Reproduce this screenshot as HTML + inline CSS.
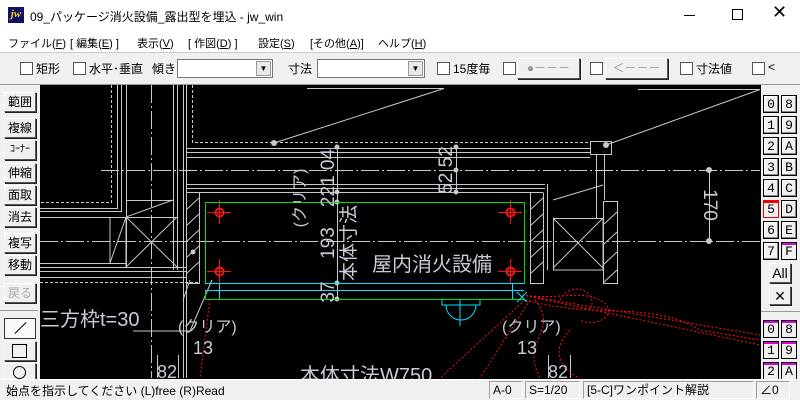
<!DOCTYPE html>
<html><head><meta charset="utf-8"><style>
*{margin:0;padding:0;box-sizing:border-box}
body{width:800px;height:400px;overflow:hidden;background:#f0f0f0;font-family:"Liberation Sans","Noto Sans CJK JP",sans-serif;font-size:12px;color:#000;position:relative}
.a{position:absolute;white-space:nowrap}
.m{font-size:11px;top:35px}
.cb{position:absolute;width:13px;height:13px;border:1px solid #555;background:#fff}
.btn{position:absolute;background:#f0f0f0;border:1px solid;border-color:#fff #555 #555 #fff;box-shadow:1px 1px 0 #222;text-align:center;font-size:12px;line-height:18px}
.lb{left:4px;width:32px;height:20px}
.rb{position:absolute;width:16px;height:18px;background:#f0f0f0;border:1px solid #000;box-shadow:inset -1px -1px 0 #888,inset 1px 1px 0 #fff;font-family:"Liberation Mono","Noto Sans CJK JP",monospace;font-size:13px;text-align:center;line-height:17px}
.sb{position:absolute;top:381px;height:18px;border:1px solid;border-color:#a0a0a0 #fff #fff #a0a0a0;line-height:16px;padding-left:3px;font-size:12px}
</style></head><body>
<div class="a" style="left:0;top:0;width:800px;height:30px;background:#fff"></div>
<div class="a" style="left:8px;top:7px;width:16px;height:16px;background:#10106a;color:#ffd000;font:bold italic 11px 'Liberation Serif',serif;line-height:15px;text-align:center">jw</div>
<div class="a" style="left:30px;top:8px;font-size:12px">09_パッケージ消火設備_露出型を埋込 - jw_win</div>
<div class="a" style="left:684px;top:15px;width:11px;height:1px;background:#000"></div>
<div class="a" style="left:732px;top:9px;width:11px;height:11px;border:1px solid #000"></div>
<div class="a" style="left:772px;top:2px;font-size:18px;font-weight:300">✕</div>
<div class="a" style="left:0;top:30px;width:800px;height:22px;background:#fff"></div>
<div class="a m" style="left:8px">ファイル(<u>F</u>)</div>
<div class="a m" style="left:70px">[ 編集(<u>E</u>) ]</div>
<div class="a m" style="left:137px">表示(<u>V</u>)</div>
<div class="a m" style="left:188px">[ 作図(<u>D</u>) ]</div>
<div class="a m" style="left:258px">設定(<u>S</u>)</div>
<div class="a m" style="left:310px">[その他(<u>A</u>)]</div>
<div class="a m" style="left:378px">ヘルプ(<u>H</u>)</div>
<div class="a" style="left:0;top:52px;width:800px;height:1px;background:#ccc"></div>
<div class="cb" style="left:20px;top:62px"></div><div class="a" style="left:36px;top:60px">矩形</div>
<div class="cb" style="left:73px;top:62px"></div><div class="a" style="left:89px;top:60px">水平･垂直</div>
<div class="a" style="left:152px;top:60px">傾き</div>
<div class="a" style="left:177px;top:59px;width:96px;height:19px;background:#fff;border:1px solid #777"></div>
<div class="a" style="left:256px;top:61px;width:15px;height:15px;background:#e8e8e8;border:1px solid #999;font-size:8px;text-align:center;line-height:14px">▼</div>
<div class="a" style="left:288px;top:60px">寸法</div>
<div class="a" style="left:317px;top:59px;width:108px;height:19px;background:#fff;border:1px solid #777"></div>
<div class="a" style="left:408px;top:61px;width:15px;height:15px;background:#e8e8e8;border:1px solid #999;font-size:8px;text-align:center;line-height:14px">▼</div>
<div class="cb" style="left:437px;top:62px"></div><div class="a" style="left:453px;top:60px">15度毎</div>
<div class="cb" style="left:503px;top:62px"></div>
<div class="btn" style="left:517px;top:58px;width:63px;height:21px;color:#999">●－－－</div>
<div class="cb" style="left:590px;top:62px"></div>
<div class="btn" style="left:605px;top:58px;width:63px;height:21px;color:#999">＜－－－</div>
<div class="cb" style="left:680px;top:62px"></div><div class="a" style="left:696px;top:60px">寸法値</div>
<div class="cb" style="left:752px;top:62px"></div><div class="a" style="left:768px;top:60px">&lt;</div>
<div class="a" style="left:0;top:84px;width:800px;height:1px;background:#999"></div>
<div class="btn lb" style="top:92px">範囲</div>
<div class="btn lb" style="top:118px">複線</div>
<div class="btn lb" style="top:140px;font-size:10px">ｺｰﾅｰ</div>
<div class="btn lb" style="top:163px">伸縮</div>
<div class="btn lb" style="top:185px">面取</div>
<div class="btn lb" style="top:207px">消去</div>
<div class="btn lb" style="top:233px">複写</div>
<div class="btn lb" style="top:255px">移動</div>
<div class="btn lb" style="top:283px;color:#aaa">戻る</div>
<div class="a" style="left:0;top:310px;width:38px;height:1px;background:#999"></div>
<div class="a" style="left:4px;top:318px;width:32px;height:21px;border:1px solid #333;background:#fafafa"></div>
<div class="a" style="top:320px;width:1px;height:16px;background:#000;transform:rotate(45deg);left:20px"></div>
<div class="btn lb" style="top:341px"></div><div class="a" style="left:12px;top:344px;width:15px;height:14px;border:1px solid #000"></div>
<div class="btn lb" style="top:363px"></div><div class="a" style="left:13px;top:366px;width:13px;height:13px;border:1px solid #000;border-radius:50%"></div>
<svg class="a" style="left:40px;top:85px" width="721" height="294" viewBox="40 85 721 294">
<rect x="40" y="85" width="721" height="294" fill="#000"/>
<g stroke="#c8c8c8" stroke-width="1" fill="none">
<path d="M111.5 85V202.5H40" stroke-dasharray="3 2"/>
<path d="M117.5 85V208.5H40M121.5 85V211.5H40"/>
<path d="M126.5 85V267M173.5 85V270M177.5 85V270M183.5 85V378M186.5 85V378"/>
<path d="M151.5 85V378M101 170.5H760M40 241.5H760" stroke-dasharray="18 3 2 3"/>
<path d="M186 148.5H590M186 152.5H590M186 157.5H590M186 184.5H545M186 188.5H545M186 192.5H543"/>
<path d="M192.5 85V142.5H590" stroke-dasharray="3 2"/>
<path d="M126 200.5H173M40 217.5H177M126 217.5V267.5H177M126 217L177 267M177 217L126 267M126 217L173 200M110 217V263L126 217"/>
<path d="M40 263.5H126M40 267.5H186M40 271.5H186M40 277.5H186"/>
<path d="M40 282.5H200" stroke-dasharray="3 2"/>
<rect x="186.5" y="192.5" width="13" height="91"/>
<path d="M186 210L199 198M186 226L199 214M186 242L199 230M186 258L199 246M186 274L199 262M183 300L190 280"/>
<path d="M530.5 192.5V283.5H543.5V192.5M530 210L543 198M530 226L543 214M530 242L543 230M530 258L543 246M530 274L543 262"/>
<path d="M547.5 192V270M553.5 218V270H603M547.5 184V192M553 218.5H603V270M553 218L603 268M603 218L553 268M553 200L603 185"/>
<path d="M590.5 141.5H611.5V154.5H590.5ZM596.5 154V218M604.5 154V200"/>
<path d="M603.5 201.5H617.5V283.5H603.5ZM603 225L617 212M603 245L617 232M603 265L617 252M603 283L617 270"/>
<path d="M337.5 147V299M456.5 147V192M709.5 170V241M307 88.5H444L274 143M638 89.5H760L606 145"/>
<path d="M133 331H190L212 280" />
<path d="M157.5 355V378M178.5 355V378M548.5 355V378M570.5 355V378"/>
</g>
<g fill="#c8c8c8"><circle cx="274" cy="143" r="3"/><circle cx="606" cy="145" r="3"/><circle cx="337" cy="147" r="2.5"/><circle cx="337" cy="192" r="2.5"/><circle cx="337" cy="202" r="2.5"/><circle cx="337" cy="283" r="2.5"/><circle cx="337" cy="299" r="2.5"/><circle cx="456" cy="147" r="2.5"/><circle cx="456" cy="170" r="2.5"/><circle cx="456" cy="192" r="2.5"/><circle cx="709" cy="170" r="3"/><circle cx="709" cy="241" r="3"/><circle cx="193" cy="252" r="2.5"/></g>
<g fill="none" stroke="#ff1010" stroke-dasharray="2 2">
<path d="M522 295L760 335M522 295L760 345M522 295C560 300 580 290 600 300C620 310 600 330 580 320M525 300L440 378M530 300L480 378M535 300C560 330 520 340 540 378M525 300C600 320 650 300 700 330L760 340M210 299L200 378"/>
<path d="M560 300C570 280 600 290 590 310M570 330C550 350 560 370 580 378"/>
</g>
<g stroke="#ff1010" fill="none"><path d="M207 212.5H231M219.5 200V224M207 271.5H231M219.5 259V283M498 212.5H522M510.5 200V224M498 271.5H522M510.5 259V283"/>
<circle cx="219.5" cy="212.5" r="4" stroke-width="2"/><circle cx="219.5" cy="271.5" r="4" stroke-width="2"/><circle cx="510.5" cy="212.5" r="4" stroke-width="2"/><circle cx="510.5" cy="271.5" r="4" stroke-width="2"/></g>
<g stroke="#00e000" fill="none"><rect x="205.5" y="202.5" width="319" height="81"/><path d="M205.5 290.5V299.5H524"/></g>
<g stroke="#00e0ff" fill="none"><path d="M205 283.5H524M205 290.5H524M219.5 283V299M512.5 283V299M442 300V305H480V300M446 305A15 15 0 0 0 476 305M460 300V326M517 292L527 302M527 292L517 302"/></g>
<g fill="#c8ccd8" font-family="'Liberation Sans','Noto Sans CJK JP',sans-serif">
<text x="372" y="271" font-size="20">屋内消火設備</text>
<text x="40" y="326" font-size="20">三方枠t=30</text>
<text x="178" y="332" font-size="16">(クリア)</text>
<text x="193" y="354" font-size="18">13</text>
<text x="502" y="332" font-size="16">(クリア)</text>
<text x="517" y="354" font-size="18">13</text>
<text x="157" y="378" font-size="18">82</text>
<text x="548" y="378" font-size="18">82</text>
<text x="300" y="382" font-size="20">本体寸法W750</text>
<text transform="translate(305,198) rotate(-90)" font-size="16" text-anchor="middle">(クリア)</text>
<text transform="translate(334,178) rotate(-90)" font-size="19" text-anchor="middle">221 04</text>
<text transform="translate(334,243) rotate(-90)" font-size="19" text-anchor="middle">193</text>
<text transform="translate(334,292) rotate(-90)" font-size="19" text-anchor="middle">37</text>
<text transform="translate(355,243) rotate(-90)" font-size="19" text-anchor="middle">本体寸法</text>
<text transform="translate(452,170) rotate(-90)" font-size="19" text-anchor="middle">52 52</text>
<text transform="translate(704,205) rotate(90)" font-size="19" text-anchor="middle">170</text>
</g>
</svg>
<div class="a" style="left:761px;top:85px;width:39px;height:295px;background:#f0f0f0"></div>
<div class="rb" style="left:763px;top:95px">0</div><div class="rb" style="left:781px;top:95px">8</div>
<div class="rb" style="left:763px;top:116px">1</div><div class="rb" style="left:781px;top:116px">9</div>
<div class="rb" style="left:763px;top:137px">2</div><div class="rb" style="left:781px;top:137px">A</div>
<div class="rb" style="left:763px;top:158px">3</div><div class="rb" style="left:781px;top:158px">B</div>
<div class="rb" style="left:763px;top:179px">4</div><div class="rb" style="left:781px;top:179px">C</div>
<div class="rb" style="left:763px;top:200px;border:1px solid #e00;box-shadow:inset 0 2px 0 #e00">5</div><div class="rb" style="left:781px;top:200px">D</div>
<div class="rb" style="left:763px;top:221px">6</div><div class="rb" style="left:781px;top:221px">E</div>
<div class="rb" style="left:763px;top:242px">7</div><div class="rb" style="left:781px;top:242px;box-shadow:inset 0 2px 0 #d0d">F</div>
<div class="btn" style="left:769px;top:263px;width:22px;height:20px;font-size:14px">All</div>
<div class="btn" style="left:769px;top:286px;width:22px;height:19px;font-size:14px">✕</div>
<div class="a" style="left:761px;top:311px;width:39px;height:1px;background:#999"></div>
<div class="rb" style="left:763px;top:320px;box-shadow:inset 0 2px 0 #d0d">0</div><div class="rb" style="left:781px;top:320px;box-shadow:inset 0 2px 0 #d0d">8</div>
<div class="rb" style="left:763px;top:341px;box-shadow:inset 0 2px 0 #d0d">1</div><div class="rb" style="left:781px;top:341px;box-shadow:inset 0 2px 0 #d0d">9</div>
<div class="rb" style="left:763px;top:362px;box-shadow:inset 0 2px 0 #d0d">2</div><div class="rb" style="left:781px;top:362px;box-shadow:inset 0 2px 0 #d0d">A</div>
<div class="a" style="left:0;top:379px;width:800px;height:21px;background:#f0f0f0;border-top:1px solid #fff"></div>
<div class="a" style="left:6px;top:382px;font-size:12px">始点を指示してください (L)free (R)Read</div>
<div class="sb" style="left:489px;width:34px">A-0</div>
<div class="sb" style="left:525px;width:55px">S=1/20</div>
<div class="sb" style="left:583px;width:171px">[5-C]ワンポイント解説</div>
<div class="sb" style="left:756px;width:34px">∠0</div>
</body></html>
